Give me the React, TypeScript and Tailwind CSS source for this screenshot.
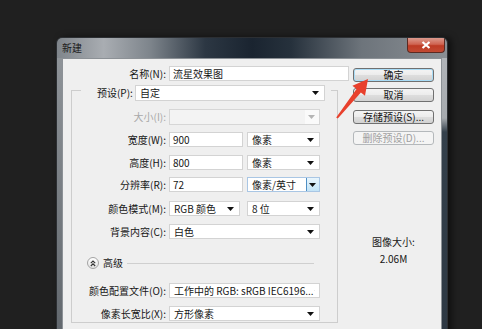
import type { ReactNode } from "react"

function Caret({ fill = "#111" }: { fill?: string }) {
	return (
		<svg width="7" height="4" viewBox="0 0 7 4">
			<path d="M0 0H7L3.5 4Z" fill={fill} />
		</svg>
	)
}

function Select({ className = "", text }: { className?: string; text: string }) {
	return (
		<div
			className={`flex h-[15px] items-center justify-between border border-[#d3d3d3] bg-white pl-[4px] pr-[5px] ${className}`}
		>
			<span className="whitespace-nowrap">{text}</span>
			<Caret />
		</div>
	)
}

function Input({ className = "", text }: { className?: string; text: string }) {
	return (
		<div
			className={`flex h-[15px] items-center border border-[#d3d3d3] bg-white px-[3px] ${className}`}
		>
			{text}
		</div>
	)
}

function Row({
	label,
	className = "",
	children
}: {
	label: string
	className?: string
	children: ReactNode
}) {
	return (
		<div className={`flex items-center gap-[3px] ${className}`}>
			<span className="w-[94px] whitespace-nowrap text-right">{label}</span>
			{children}
		</div>
	)
}

function Button({ children, className = "" }: { children: ReactNode; className?: string }) {
	return (
		<div
			className={`flex h-[14px] items-center justify-center rounded-[3px] border border-[#707070] bg-[linear-gradient(to_bottom,#f4f4f4_0%,#ececec_50%,#dedede_51%,#d2d2d2_100%)] ${className}`}
		>
			{children}
		</div>
	)
}

export default function App() {
	return (
		<div className="relative h-[329px] w-[482px] overflow-hidden bg-[#202020] font-['Noto_Sans_CJK_SC',sans-serif] text-[10px] leading-none text-[#161616]">
			<div className="ml-[56px] mt-[37px] flex h-[320px] w-[392px] flex-col overflow-hidden rounded-t-[6px] border border-[#2c2f33] shadow-[4px_0_6px_rgba(0,0,0,0.5)]">
				{/* title bar */}
				<div className="flex h-[20px] items-start justify-between bg-[linear-gradient(90deg,#7f858b_0%,#a9adb2_12%,#7d848b_24%,#2c3743_38%,#1a2430_50%,#26313c_60%,#6d747b_78%,#8a8f94_100%)]">
					<span className="ml-[5px] mt-[5px] text-[#1a1a1a]">新建</span>
					<div className="mr-[2px] flex h-[15px] w-[38px] items-center justify-center rounded-b-[4px] border border-t-0 border-[#5b2a22] bg-[linear-gradient(to_bottom,#dc9a8d_0%,#cf6350_45%,#bd3a24_55%,#c24a33_100%)]">
						<svg width="10" height="8" viewBox="0 0 10 8">
							<path d="M1.5 1L8.5 7M8.5 1L1.5 7" stroke="#fff" strokeWidth="2.2" />
						</svg>
					</div>
				</div>

				<div className="flex flex-1">
					<div className="w-[5px] bg-[linear-gradient(to_bottom,#8e9398,#5e646a)]" />

					{/* client */}
					<div className="flex w-[381px] border border-[#8c9196] bg-[#efefef]">
						<div className="w-[286px]">
							<div className="mt-[7px] flex items-center gap-[3px]">
								<span className="w-[103px] text-right">名称(N):</span>
								<Input className="w-[180px]" text="流星效果图" />
							</div>

							<div className="ml-[8px] mt-[9px] w-[267px] border border-[#cdcdcd] pb-[1px]">
								<div className="-mt-[6px] ml-[9px] flex h-[16px] w-[250px] items-center gap-[3px] bg-[#efefef] pl-[16px] pr-[6px]">
									<span className="w-[35px] whitespace-nowrap text-right">预设(P):</span>
									<Select className="h-[16px] w-[190px]" text="自定" />
								</div>

								<Row label="大小(I):" className="mt-[8px] text-[#a8a8a8]">
									<div className="flex h-[16px] w-[151px] items-center justify-end border border-[#d6d6d6] bg-[#f3f3f3]">
										<div className="flex h-full w-[14px] items-center justify-center bg-[#fafafa]">
											<Caret fill="#b5b5b5" />
										</div>
									</div>
								</Row>

								<Row label="宽度(W):" className="mt-[7px]">
									<Input className="w-[74px]" text="900" />
									<Select className="ml-[1px] w-[73px]" text="像素" />
								</Row>

								<Row label="高度(H):" className="mt-[8px]">
									<Input className="w-[74px]" text="800" />
									<Select className="ml-[1px] w-[73px]" text="像素" />
								</Row>

								<Row label="分辨率(R):" className="mt-[7px]">
									<Input className="w-[74px] border-[#86b4e2]" text="72" />
									<div className="ml-[1px] flex h-[15px] w-[73px] items-center justify-between border border-[#a9c6e4] bg-white pl-[4px]">
										<span>像素/英寸</span>
										<div className="flex h-full w-[13px] items-center justify-center border-l border-[#4f8fc4] bg-[linear-gradient(to_bottom,#e8f5fd,#c2e3f6)]">
											<Caret />
										</div>
									</div>
								</Row>

								<Row label="颜色模式(M):" className="mt-[9px]">
									<Select className="w-[71px]" text="RGB 颜色" />
									<Select className="ml-[4px] w-[73px]" text="8 位" />
								</Row>

								<Row label="背景内容(C):" className="mt-[8px]">
									<Select className="w-[151px]" text="白色" />
								</Row>

								<div className="ml-[15px] mr-[23px] mt-[18px] flex h-[12px] items-center">
									<div className="flex h-[12px] w-[12px] items-center justify-center rounded-full border border-[#a4a4a4] bg-[linear-gradient(to_bottom,#ffffff,#e2e2e2)]">
										<svg width="6" height="7" viewBox="0 0 6 7">
											<path d="M0.8 3.2L3 1L5.2 3.2M0.8 6L3 3.8L5.2 6" stroke="#333" strokeWidth="1.1" fill="none" />
										</svg>
									</div>
									<span className="ml-[4px]">高级</span>
									<div className="ml-[4px] h-px flex-1 bg-[#cfcfcf]" />
								</div>

								<Row label="颜色配置文件(O):" className="mt-[14px]">
									<Select className="w-[151px]" text="工作中的 RGB: sRGB IEC6196..." />
								</Row>

								<Row label="像素长宽比(X):" className="mt-[8px]">
									<Select className="w-[151px]" text="方形像素" />
								</Row>
							</div>
						</div>

						{/* right column */}
						<div className="ml-[4px] flex w-[81px] flex-col">
							<Button className="mt-[9px] border-[#3c8fc9] bg-[linear-gradient(to_bottom,#f1f5f8_0%,#e6edf2_50%,#d8e2e9_51%,#ccd8e1_100%)] shadow-[inset_0_0_0_1px_#a9dcf6]">
								确定
							</Button>
							<Button className="mt-[6px]">取消</Button>
							<Button className="mt-[8px]">存储预设(S)...</Button>
							<Button className="mt-[7px] border-[#b4b8bb] bg-[#f4f4f4] bg-none text-[#a0a0a0]">
								删除预设(D)...
							</Button>
							<div className="mt-[92px] flex flex-col items-center">
								<span>图像大小:</span>
								<span className="mt-[7px]">2.06M</span>
							</div>
						</div>
					</div>

					<div className="w-[5px] bg-[linear-gradient(to_bottom,#b0b4b8_0px,#a6aaae_60px,#34404b_74px,#2d3843_100%)]" />
				</div>
			</div>

			{/* red annotation arrow */}
			<svg className="absolute left-[330px] top-[74px]" width="42" height="48" viewBox="0 0 42 48">
				<polygon
					points="38,5 22.4,11.7 26.5,14.9 6.2,43.4 7.8,44.6 30.9,18.4 35,21.7"
					fill="#e8402c"
				/>
			</svg>
		</div>
	)
}
